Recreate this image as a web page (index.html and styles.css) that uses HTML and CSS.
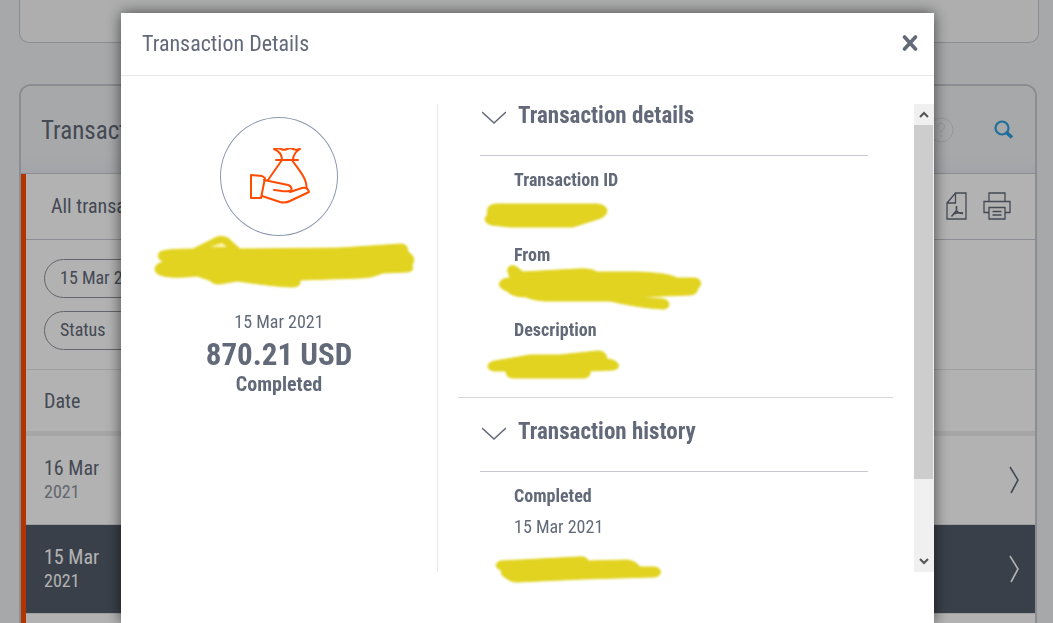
FILE: index.html
```html
<!DOCTYPE html>
<html lang="en">
<head>
    <meta charset="UTF-8">
    <meta name="viewport" content="width=device-width, initial-scale=1.0">
    <title>Transaction Details</title>
    <link rel="stylesheet" href="styles.css">
</head>
<body>
    <main class="page">
        <div class="panel"></div>

        <section class="card">
            <header class="card-header">
                <h1>Transactions</h1>
                <button class="icon-button help" aria-label="Help">
                    <svg width="26" height="26" viewBox="0 0 26 26" fill="none" stroke="currentColor">
                        <circle cx="13" cy="13" r="12"/>
                        <path d="M9.500 10c0-5 7-5 7-.5 0 3-3.500 3-3.500 6.500M13 18v2"/>
                    </svg>
                </button>
                <button class="icon-button search" aria-label="Search">
                    <svg width="20" height="20" viewBox="0 0 20 20" fill="none" stroke="currentColor">
                        <circle cx="8" cy="8" r="6.500" stroke-width="2.200"/>
                        <path d="M12.500 12.500l5.500 5" stroke-width="3.600"/>
                    </svg>
                </button>
            </header>

            <div class="card-body">
                <div class="toolbar">
                    <a href="#" class="tab">All transactions</a>
                    <button class="icon-button" aria-label="Download PDF">
                        <svg width="21" height="28" viewBox="0 0 21 28" fill="none" stroke="currentColor" stroke-width="1.300">
                            <path d="M9.500 1H20v26H1V11zM9.500 1v10H1"/>
                            <path d="M10.500 14v4.500L5.500 24.500M10.500 18.500c1 2 3.500 3 6.500 3M7.500 22c3-1.200 6-1.500 9.500-1" stroke-width="1.600"/>
                        </svg>
                    </button>
                    <button class="icon-button print" aria-label="Print">
                        <svg width="28" height="28" viewBox="0 0 28 28" fill="none" stroke="currentColor" stroke-width="1.300">
                            <path d="M6 9.500V1h16v8.500M6 20.500H1v-11h26v11h-5"/>
                            <path d="M6 15.500h16V27H6zM9.500 19.500h9M9.500 23h9"/>
                        </svg>
                    </button>
                </div>

                <div class="filters">
                    <button class="chip">15 Mar 2021</button>
                    <button class="chip">Status</button>
                </div>

                <table class="transactions">
                    <thead>
                        <tr><th colspan="2">Date</th></tr>
                    </thead>
                    <tbody>
                        <tr>
                            <td>16 Mar<span class="year">2021</span></td>
                            <td class="open">
                                <button class="icon-button" aria-label="Open 16 Mar">
                                    <svg width="12" height="28" viewBox="0 0 12 28" fill="none" stroke="currentColor" stroke-width="1.600"><path d="M2 1l8 13-7 13"/></svg>
                                </button>
                            </td>
                        </tr>
                        <tr class="selected">
                            <td>15 Mar<span class="year">2021</span></td>
                            <td class="open">
                                <button class="icon-button" aria-label="Open 15 Mar">
                                    <svg width="12" height="28" viewBox="0 0 12 28" fill="none" stroke="currentColor" stroke-width="1.600"><path d="M2 1l8 13-7 13"/></svg>
                                </button>
                            </td>
                        </tr>
                        <tr><td colspan="2"></td></tr>
                    </tbody>
                </table>
            </div>
        </section>
    </main>

    <div class="overlay">
        <div class="modal" role="dialog" aria-labelledby="modal-title">
            <header class="modal-header">
                <h2 id="modal-title">Transaction Details</h2>
                <button class="icon-button close" aria-label="Close">
                    <svg width="16" height="16" viewBox="0 0 16 16" fill="none" stroke="currentColor" stroke-width="3.600" stroke-linecap="round"><path d="M2.500 2L13.500 14M13.500 2L2.500 14"/></svg>
                </button>
            </header>

            <div class="modal-body">
                <div class="summary">
                    <div class="summary-icon">
                        <svg width="64" height="58" viewBox="-3 1 64 58" fill="none" stroke="currentColor" stroke-width="2" stroke-linejoin="round" stroke-linecap="round">
                            <path d="M24 2c3-1 5-1 7 0 2 1 4 1 6 0 2-1 4-1 6 0 2 1 4 1 7 0-5 3-7 7-7 11H32c0-5-3-9-8-11z"/>
                            <path d="M26 13h22"/>
                            <path d="M32 13L18 33M42 13c6 9 15 18 14.500 28"/>
                            <path d="M1 28l11 1 3 2-4 20H1z"/>
                            <path d="M14 33l24 5c4 1 5 6 1 6-5 1-10-1-15-1M40 45l12-4c4-1 6 0 7 4L40 54c-4 2-6 2-10 1l-18-6"/>
                        </svg>
                    </div>
                    <svg class="mark" width="270" height="60" viewBox="0 0 270 60">
                        <path d="M16 16Q20 13 49 13L73 1Q78 -1 84 2L96 13L196 12L257 8Q264 8 264 16Q273 21 268 29Q271 36 262 36L239 37Q228 42 216 42L156 44Q157 51 149 51Q134 51 93 45L76 48Q70 49 65 44L53 40Q26 43 16 39C8 36 10 27 20 26C11 22 15 17 16 16Z"/>
                        <path class="gap" d="M66 11l12-4 5 4z"/>
                    </svg>
                    <p class="date">15 Mar 2021</p>
                    <p class="amount">870.21 USD</p>
                    <p class="status">Completed</p>
                </div>

                <div class="details">
                    <section class="group">
                        <h3>
                            <svg width="24" height="14" viewBox="0 0 24 14" fill="none" stroke="currentColor" stroke-width="1.600"><path d="M0 1l12 11L24 1"/></svg>
                            Transaction details
                        </h3>
                        <dl>
                            <dt>Transaction ID</dt>
                            <dd class="hidden-value">
                                <svg class="mark" width="240" height="51" viewBox="0 0 240 51">
                                    <path d="M8 16Q10 12 17 12L117 12Q127 13 127 19Q126 25 118 27L93 35H30L12 33C4 32 4 25 7 24Z"/>
                                </svg>
                            </dd>
                            <dt>From</dt>
                            <dd class="hidden-value">
                                <svg class="mark" width="240" height="51" viewBox="0 0 240 51">
                                    <path d="M28 5C26-2 34-3 38 1L43 5L97 2Q111 1 117 5H157Q189 6 197 11H214C222 11 222 19 218 21Q217 28 210 28L157 30L183 32C191 33 191 42 183 42Q160 41 130 34H64Q52 33 46 30Q32 30 27 24C16 21 17 11 30 11Z"/>
                                </svg>
                            </dd>
                            <dt>Description</dt>
                            <dd class="hidden-value">
                                <svg class="mark" width="240" height="51" viewBox="0 0 240 51">
                                    <path d="M15 19L50 13H80L117 9Q126 8 127 17C140 18 142 27 133 28L110 29Q111 36 103 36H33Q26 36 26 29H16C6 30 5 20 15 19Z"/>
                                </svg>
                            </dd>
                        </dl>
                    </section>

                    <section class="group">
                        <h3>
                            <svg width="24" height="14" viewBox="0 0 24 14" fill="none" stroke="currentColor" stroke-width="1.600"><path d="M0 1l12 11L24 1"/></svg>
                            Transaction history
                        </h3>
                        <dl>
                            <dt>Completed</dt>
                            <dd>15 Mar 2021</dd>
                            <dd class="hidden-value">
                                <svg class="mark" width="240" height="51" viewBox="0 0 240 51">
                                    <path d="M21 22L98 18Q107 17 108 22L147 21Q156 22 160 28H175C183 29 182 38 174 38L103 40L38 43Q31 44 22 36L21 31C14 29 15 23 21 22Z"/>
                                </svg>
                            </dd>
                        </dl>
                    </section>
                </div>

                <div class="scrollbar">
                    <button aria-label="Scroll up">
                        <svg width="10" height="7" viewBox="0 0 10 7" fill="none" stroke="currentColor" stroke-width="2"><path d="M1 6l4-4 4 4"/></svg>
                    </button>
                    <div class="track"><div class="thumb"></div></div>
                    <button aria-label="Scroll down">
                        <svg width="10" height="7" viewBox="0 0 10 7" fill="none" stroke="currentColor" stroke-width="2"><path d="M1 1l4 4 4-4"/></svg>
                    </button>
                </div>
            </div>
        </div>
    </div>
</body>
</html>
```
FILE: styles.css
```css
* {
    box-sizing: border-box;
}
body {
    margin: 0;
    height: 100vh;
    overflow: hidden;
    background-color: #eff1f3;
    color: #626978;
    font-family: "Roboto Condensed", "Liberation Sans Narrow", Roboto, sans-serif;
    font-size: 18px;
}
h1, h2, h3, p, dl, dd {
    margin: 0;
}
button {
    font: inherit;
    color: inherit;
    cursor: pointer;
}
svg {
    display: block;
}
.icon-button {
    display: block;
    padding: 0;
    border: none;
    background: none;
}

/* Page behind the dialog */
.page {
    padding: 0 16px 0 19px;
}
.panel {
    height: 43px;
    margin-right: -2px;
    margin-bottom: 41px;
    border: 1px solid #c8cad0;
    border-top: none;
    border-radius: 0 0 10px 10px;
    background-color: #f9fafb;
}
.card {
    border: 2px solid #c8cad2;
    border-bottom: none;
    border-radius: 12px 12px 0 0;
    overflow: hidden;
    background-color: #fff;
}
.card-header {
    display: flex;
    align-items: center;
    height: 88px;
    padding: 1px 21px 0 20px;
    border-bottom: 1px solid #c8cad2;
    background: linear-gradient(#eff1f3 80%, #e9ebf2);
}
.card-header h1 {
    flex: 1;
    font-size: 25px;
    font-weight: normal;
}
.help {
    margin-right: 40px;
    color: #d6d8dc;
}
.search {
    color: #2b9fe0;
}
.card-body {
    border-left: 5px solid #ff4c00;
}
.toolbar {
    display: flex;
    align-items: center;
    height: 66px;
    padding: 0 24px 2px 25px;
    border-bottom: 1px solid #c8cad2;
}
.tab {
    flex: 1;
    color: inherit;
    font-size: 20px;
    text-decoration: none;
}
.print {
    margin-left: 16px;
}
.filters {
    display: flex;
    flex-direction: column;
    align-items: flex-start;
    gap: 13px;
    height: 130px;
    padding: 19px 18px;
    border-bottom: 1px solid #e4e5e8;
}
.chip {
    min-width: 110px;
    height: 39px;
    padding: 0 15px 2px;
    border: 1px solid #8f939c;
    border-radius: 20px;
    background: none;
    text-align: left;
}
.transactions {
    width: 100%;
    border-spacing: 0;
    font-size: 20px;
}
.transactions th {
    height: 66px;
    padding: 0 18px;
    border-bottom: 5px solid #eee;
    font-weight: normal;
    text-align: left;
}
.transactions td {
    height: 89px;
    padding: 0 18px;
    border-bottom: 1px solid #e4e5e8;
    line-height: 24px;
}
.transactions .open {
    width: 27px;
    padding: 0 15px 0 0;
}
.year {
    display: block;
    color: #8d929c;
    font-size: 18px;
}
.selected, .selected .year {
    color: #fff;
}
.selected {
    background-color: #535c6a;
}

/* Dialog */
.overlay {
    position: fixed;
    inset: 0;
    padding: 13px 119px 0 121px;
    background-color: rgba(0, 0, 0, 0.3);
}
.modal {
    height: 100%;
    background-color: #fff;
    box-shadow: 0 0 14px rgba(0, 0, 0, 0.6);
}
.modal-header {
    display: flex;
    align-items: center;
    justify-content: space-between;
    height: 63px;
    padding: 0 16px 2px 21px;
    border-bottom: 1px solid #e8e8ea;
}
.modal-header h2 {
    font-size: 22px;
    font-weight: normal;
}
.modal-body {
    display: grid;
    grid-template-columns: 317px 1fr 20px;
    grid-template-rows: 100%;
    height: 468px;
    margin-top: 28px;
}
.summary {
    display: flex;
    flex-direction: column;
    align-items: center;
    padding-top: 13px;
    border-right: 1px solid #e8e8ea;
}
.summary-icon {
    display: flex;
    align-items: center;
    justify-content: center;
    width: 118px;
    height: 119px;
    border: 1px solid #8d98b0;
    border-radius: 50%;
    color: #ff4c00;
}
.date {
    margin-top: 14px;
    line-height: 24px;
}
.amount {
    font-size: 31px;
    font-weight: bold;
    line-height: 42px;
}
.status {
    font-size: 20px;
    font-weight: bold;
    line-height: 16px;
}
.mark {
    overflow: visible;
    fill: #e1d31f;
    stroke: #e1d31f;
    stroke-width: 1;
    filter: blur(1px);
}
.gap {
    fill: #fff8c0;
    stroke: none;
}
.details {
    padding: 0 21px 0 20px;
}
.group {
    padding: 0 25px 0 22px;
}
.group + .group {
    padding-top: 22px;
    border-top: 1px solid #d6d7da;
}
.group h3 {
    display: flex;
    align-items: center;
    gap: 12px;
    height: 52px;
    padding: 0 0 27px 2px;
    border-bottom: 1px solid #c8c8cf;
    font-size: 23px;
    line-height: 24px;
}
.group h3 svg {
    margin-top: 3px;
}
.group dl {
    padding: 12px 0 4px 34px;
}
.group dt, .group dd {
    line-height: 24px;
}
.group dt {
    font-weight: bold;
}
.group dt + dd {
    padding-top: 7px;
}
.group .hidden-value {
    height: 51px;
    margin-left: -34px;
    padding: 0;
}
.scrollbar {
    display: flex;
    flex-direction: column;
    background-color: #f0f0f0;
    color: #555;
}
.scrollbar button {
    display: flex;
    align-items: center;
    justify-content: center;
    height: 21px;
    padding: 0;
    border: none;
    background: none;
}
.track {
    flex: 1;
    padding-right: 1px;
}
.thumb {
    height: 83%;
    background-color: #cdcdcd;
}
```
